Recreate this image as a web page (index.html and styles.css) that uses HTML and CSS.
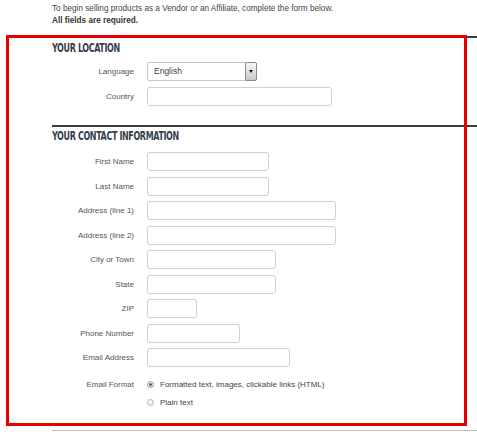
FILE: index.html
```html
<!DOCTYPE html>
<html>
<head>
<meta charset="utf-8">
<link rel="stylesheet" href="styles.css">
</head>
<body>
<div class="page">
  <div class="intro">
    <p>To begin selling products as a Vendor or an Affiliate, complete the form below.</p>
    <p class="req">All fields are required.</p>
  </div>

  <section class="section s1">
    <h2>YOUR LOCATION</h2>
    <div class="rows">
      <label>Language</label>
      <div class="select"><span class="sel-text">English</span><span class="sel-btn"><span class="tri"></span></span></div>
      <label>Country</label>
      <div class="field w-country"></div>
    </div>
  </section>

  <section class="section s2">
    <h2>YOUR CONTACT INFORMATION</h2>
    <div class="rows">
      <label>First Name</label>
      <div class="field w-name"></div>
      <label>Last Name</label>
      <div class="field w-name"></div>
      <label>Address (line 1)</label>
      <div class="field w-addr"></div>
      <label>Address (line 2)</label>
      <div class="field w-addr"></div>
      <label>City or Town</label>
      <div class="field w-city"></div>
      <label>State</label>
      <div class="field w-city"></div>
      <label>ZIP</label>
      <div class="field w-zip"></div>
      <label>Phone Number</label>
      <div class="field w-phone"></div>
      <label>Email Address</label>
      <div class="field w-email"></div>
      <label class="top">Email Format</label>
      <div class="radios">
        <div class="radio"><span class="dot on"></span>Formatted text, images, clickable links (HTML)</div>
        <div class="radio"><span class="dot"></span>Plain text</div>
      </div>
    </div>
  </section>
  <div class="rule"></div>

  <div class="highlight"></div>
</div>
</body>
</html>
```

FILE: styles.css
```css
html, body {
  margin: 0;
  padding: 0;
  background: #fff;
}
body {
  font-family: "Liberation Sans", Arial, sans-serif;
  font-size: 8px;
  color: #444;
  width: 477px;
  overflow: hidden;
}
.page {
  position: relative;
  width: 477px;
  height: 435px;
}
.intro {
  padding: 3px 0 0 52px;
}
.intro p {
  margin: 0;
  line-height: 12px;
  font-size: 8.2px;
}
.intro .req {
  font-weight: bold;
  color: #333;
}
.section {
  margin-left: 52px;
  border-top: 2px solid #3c3c3c;
}
.s1 {
  margin-top: 9px;
  padding-bottom: 19px;
}
.s2 {
  padding-bottom: 18px;
}
.section h2 {
  margin: 0;
  padding-top: 1.5px;
  font-family: "DejaVu Sans Condensed", "DejaVu Sans", sans-serif;
  font-stretch: condensed;
  font-weight: bold;
  font-size: 12.5px;
  line-height: 16px;
  letter-spacing: -0.5px;
  color: #34404e;
  transform: scaleX(0.71);
  transform-origin: left center;
}
.s1 h2 { margin-bottom: 6.5px; }
.s2 h2 { margin-bottom: 8px; }
.rows {
  display: grid;
  grid-template-columns: 82px auto;
  column-gap: 13px;
  row-gap: 5.5px;
  justify-items: start;
  align-items: center;
}
.rows label {
  justify-self: end;
  color: #555;
  font-size: 8px;
}
.rows label.top {
  align-self: start;
  padding-top: 7px;
}
.field {
  height: 19px;
  box-sizing: border-box;
  border: 1px solid #d0d0d0;
  border-radius: 3px;
  background: #fff;
}
.w-country { width: 185px; }
.w-name { width: 122px; }
.w-addr { width: 189px; }
.w-city { width: 129px; }
.w-zip { width: 50px; }
.w-phone { width: 93px; }
.w-email { width: 143px; }

.select {
  width: 110px;
  height: 19px;
  box-sizing: border-box;
  border: 1px solid #c8c8c8;
  border-radius: 2px;
  display: flex;
  align-items: stretch;
  background: #fff;
}
.sel-text {
  flex: 1;
  padding-left: 6px;
  font-size: 8.5px;
  line-height: 17px;
  color: #444;
}
.sel-btn {
  width: 10px;
  border: 1px solid #8a8a8a;
  border-radius: 2px;
  margin: -1px -1px -1px 0;
  background: linear-gradient(#f6f6f6, #c9c9c9);
  display: flex;
  align-items: center;
  justify-content: center;
}
.tri {
  width: 0;
  height: 0;
  border-left: 2.5px solid transparent;
  border-right: 2.5px solid transparent;
  border-top: 3px solid #111;
}
.radios {
  padding-top: 3px;
}
.radio {
  height: 18px;
  display: flex;
  align-items: center;
  color: #444;
  font-size: 8px;
}
.dot {
  width: 7px;
  height: 7px;
  box-sizing: border-box;
  border-radius: 50%;
  border: 1px solid #b5b5b5;
  background: radial-gradient(circle at 40% 35%, #fff, #dcdcdc);
  margin: 0 6px 0 0;
  position: relative;
}
.dot.on {
  border-color: #9a9a9a;
}
.dot.on::after {
  content: "";
  position: absolute;
  left: 1px;
  top: 1px;
  width: 3px;
  height: 3px;
  border-radius: 50%;
  background: #2f6a9e;
}
.rule {
  margin-left: 52px;
  border-top: 1px solid #bdbdbd;
}
.highlight {
  position: absolute;
  left: 6px;
  top: 35px;
  width: 461px;
  height: 391px;
  box-sizing: border-box;
  border: 3px solid #e80000;
  pointer-events: none;
}
```
